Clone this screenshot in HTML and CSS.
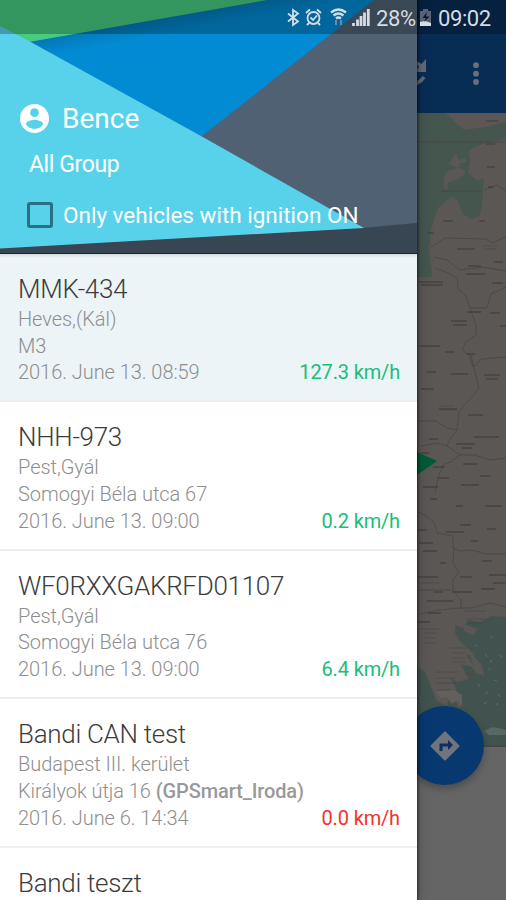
FILE: index.html
```html
<!DOCTYPE html>
<html lang="en">
<head>
    <meta charset="UTF-8">
    <meta name="viewport" content="width=device-width, initial-scale=1.0">
    <title>Vehicles</title>
    <link rel="stylesheet" href="styles.css">
</head>
<body>
    <div class="screen">
        <!-- map page, dimmed behind the drawer -->
        <div class="page">
            <div class="toolbar">
                <svg class="refresh" viewBox="0 0 24 30" fill="none" stroke="#626a74" stroke-width="3.600">
                    <path d="M2 6Q12 1 18 8M3 26Q15 26 20 18"/>
                    <path d="M22 0V13H10Z" fill="#626a74" stroke="none"/>
                </svg>
                <svg class="more" viewBox="0 0 6 24" fill="#68717b">
                    <circle cx="3" cy="3.2" r="2.9"/><circle cx="3" cy="11.7" r="2.9"/><circle cx="3" cy="20" r="2.9"/>
                </svg>
            </div>
            <svg class="map" viewBox="400 113 106 632">
                <path d="M400 113H506V745H400Z" fill="#5b5755"/>
                <path d="M400 113H446L455 122L464 130L486 127L506 122V139L482 144L469 150L470 162L468 173L478 181L484 178L483 190L482 207L479 216L471 219L463 214L458 202L453 196L447 200L438 208L434 220L431 230L429 250L432 272L431 277H400Z" fill="#45564f"/>
                <path d="M446 113H488L485 123L464 128L456 122Z" fill="#5b5755"/>
                <path d="M449 164L453 158L456 153L459 160L466 158V162L459 164L459 168L453 166ZM444 176L449 170L459 168L466 171L464 175L456 180L448 182L447 191L444 188Z" fill="#5b5755"/>
                <path d="M455 625L462 628L469 620L480 622L491 616L506 617V745H400V655L412 664L426 672L441 675L452 674L462 681L469 679L461 665L470 666L478 672L466 655L475 655L460 641L455 633Z" fill="#42534f"/>
                <path d="M421 663L442 674L456 671L463 680L458 682L451 678L463 704L459 708L451 693L447 706L437 701L431 687ZM468 650L482 665L484 676L476 673ZM463 624L478 629L473 635L464 631Z" fill="#5b5755"/>
                <path d="M436 691L454 690L462 695V706L457 700L452 704L447 697L440 698Z" fill="#625f5d"/>
                <path d="M484 731L493 727L506 730V735L489 735Z" fill="#596762"/>
                <path d="M485 654l2 3M490 662l2 -2M494 680l3 1M485 694l3 -2M498 694l2 3M489 668l1 2M500 655l2 2M484 704l3 -2M496 705l2 -2M475 645l2 1M478 684l2 3M491 636l1 2" stroke="#5c6562" stroke-width="1.2"/>
                <g fill="none" stroke="#484544" stroke-width=".8">
                    <path d="M418 142H506M441 191H482M484 190L497 185L506 191M431 247L445 238L486 239L492 243L506 237M434 257L447 260L460 270L482 267L506 271M435 268L448 273L457 278L458 289L466 296L470 308H487L491 294L506 287"/>
                    <path d="M470 308L476 325V335L466 342L462 350L469 355L473 367L482 359L506 357M471 355L476 376L479 388L472 397L459 411L457 430L450 439L447 446L460 455L451 462L444 464L438 477L435 493M418 421L436 421L447 428L458 430M421 446L438 443L447 446M460 455L475 455L490 460L506 458"/>
                    <path d="M418 512L428 517L435 524L437 533L453 536L453 548L460 551L472 550L486 554L506 554M454 549L453 563L459 573L453 579V590L461 600V608L472 608L490 603L506 607M461 608L439 610L420 614M418 590H451"/>
                </g>
                <g class="labels" fill="none" stroke="#35312f" stroke-width="1.3">
                    <path d="M486 121H498M486 144H495M487 167H495M488 187H493M480 221H485M443 221H453M428 233H434M457 249H475M468 266H481M466 274H485M494 262H503M492 283H503M419 282H443M421 285H443"/>
                    <path d="M467 312H481M490 313H500M451 321H467M453 325H467M500 326H506M420 346H440M445 352H454M467 354H475M427 372H436M451 374H468M484 375H500M486 379H498M421 389H434M439 409H457M468 415H483M429 439H438M474 437H499M456 444H475M462 448H472M421 453H429M463 464H477M433 467H445M480 476H490M438 478H449M461 485H479M423 487H438M430 499H437M456 506H463M485 506H502"/>
                    <path d="M460 525H471M487 529H496M418 530H427M446 532H464M471 541H478M419 543H433M423 551H437M482 561H492M440 563H446M460 577H472M489 575H506M418 577H438M493 583H505M434 592H443M452 592H472M481 589H495M427 601H453M428 613H441M418 622H430"/>
                </g>
                <g class="labels faint" fill="none" stroke="#3c3536" stroke-width="1.2">
                    <path d="M482 246H498M484 249H496M439 406H454M441 410H457M464 611H486M466 619H484M467 623H482M418 583H440M418 629H439M424 633H437M424 638H436M424 643H437M449 648H467M452 653H465M453 658H465M452 662H466M436 672H458M435 678H455M436 683H456M437 690H451"/>
                </g>
                <path d="M478 221H485M465 674H475" stroke="#673d3d" stroke-width="1.2"/>
                <path d="M417 452L437 461L417 475Z" fill="#005b36"/>
            </svg>
            <div class="panel"></div>
            <div class="fab">
                <svg viewBox="0 0 30 30">
                    <path d="M15 1.5L28.5 15L15 28.5L1.5 15Z" fill="#70757d" stroke="#70757d" stroke-width="2" stroke-linejoin="round"/>
                    <path d="M11 20V14H19" fill="none" stroke="#102d61" stroke-width="3"/>
                    <path d="M18 9L23 14L18 19Z" fill="#102d61"/>
                </svg>
            </div>
        </div>

        <div class="drawer">
            <div class="header">
                <svg class="header-bg" viewBox="0 0 417 253" preserveAspectRatio="none">
                    <defs>
                        <linearGradient id="shade" gradientUnits="userSpaceOnUse" x1="140" y1="22" x2="143" y2="38">
                            <stop offset="0" stop-color="#0479b8"/>
                            <stop offset="1" stop-color="#028ad3"/>
                        </linearGradient>
                    </defs>
                    <rect width="417" height="253" fill="#384553"/>
                    <path d="M0 0H417V223L362 228L200 137Z" fill="#4f6172"/>
                    <path d="M29 41L267 0H374L201 137Z" fill="url(#shade)"/>
                    <path d="M0 0H267L29 42L0 27Z" fill="#46cb80"/>
                    <path d="M0 26L29 41L201 136L364 228L0 248.500Z" fill="#58d2eb"/>
                </svg>
                <div class="user">
                    <svg class="avatar" viewBox="2 2 20 20" fill="#fff">
                        <path d="M12 2C6.480 2 2 6.480 2 12s4.480 10 10 10 10-4.480 10-10S17.520 2 12 2zm0 3c1.660 0 3 1.340 3 3s-1.340 3-3 3-3-1.340-3-3 1.340-3 3-3zm0 14.200c-2.500 0-4.710-1.280-6-3.220.030-1.990 4-3.080 6-3.080 1.990 0 5.970 1.090 6 3.080-1.290 1.940-3.500 3.220-6 3.220z"/>
                    </svg>
                    <span>Bence</span>
                </div>
                <div class="group">All Group</div>
                <div class="filter">
                    <span class="checkbox"></span>
                    <span>Only vehicles with ignition ON</span>
                </div>
            </div>
            <div class="list">
                <div class="item selected">
                    <div class="name">MMK-434</div>
                    <div>Heves,(Kál)</div>
                    <div>M3</div>
                    <div class="last"><span>2016. June 13. 08:59</span><span class="speed">127.3 km/h</span></div>
                </div>
                <div class="item">
                    <div class="name">NHH-973</div>
                    <div>Pest,Gyál</div>
                    <div>Somogyi Béla utca 67</div>
                    <div class="last"><span>2016. June 13. 09:00</span><span class="speed">0.2 km/h</span></div>
                </div>
                <div class="item">
                    <div class="name">WF0RXXGAKRFD01107</div>
                    <div>Pest,Gyál</div>
                    <div>Somogyi Béla utca 76</div>
                    <div class="last"><span>2016. June 13. 09:00</span><span class="speed">6.4 km/h</span></div>
                </div>
                <div class="item">
                    <div class="name">Bandi CAN test</div>
                    <div>Budapest III. kerület</div>
                    <div>Királyok útja 16 <b>(GPSmart_Iroda)</b></div>
                    <div class="last"><span>2016. June 6. 14:34</span><span class="speed stopped">0.0 km/h</span></div>
                </div>
                <div class="item">
                    <div class="name">Bandi teszt</div>
                </div>
            </div>
        </div>

        <div class="statusbar">
            <svg class="status-icons" viewBox="286 6 86 24" fill="none" stroke="#d3dde5" stroke-width="1.800">
                <path d="M288 14.500L298 22.500L293 26V11L298 14.500L288 22.500"/>
                <circle cx="313.500" cy="19" r="6"/>
                <path d="M310.500 18.500L313 21L317 16.500M306 14L310 10.500M317 10.500L321 14M309 24L307 26M318 24L320 26"/>
                <path d="M331 13.500Q338.500 7.500 346 13.500M333.500 16.500Q338.500 12.500 343.500 16.500M336 19.500Q338.500 17.500 341 19.500" stroke-width="2.400"/>
                <path d="M336 21V26M341 21V26" stroke="#7193ac"/>
                <path d="M353.500 27V24M357.500 27V20.500M361 27V17M364.500 27V13.500M368.300 27V10" stroke-width="2.800"/>
            </svg>
            <span class="percent">28%</span>
            <svg class="battery" viewBox="0 0 13 18">
                <path d="M4 0H9V2H12V17H1V2H4Z" fill="#566373"/>
                <path d="M1 13L6 12L12 14V17H1Z" fill="#d6dde5"/>
                <path d="M8 3L3.500 9H7L5 13L10.500 7.500H7Z" fill="#07172c"/>
            </svg>
            <span class="time">09:02</span>
        </div>
    </div>
</body>
</html>
```
FILE: styles.css
```css
* {
    box-sizing: border-box;
}

body {
    margin: 0;
    font-family: Roboto, "Noto Sans", sans-serif;
    overflow: hidden;
}

.screen {
    position: relative;
    width: 506px;
    height: 900px;
    overflow: hidden;
}

.page {
    display: flex;
    flex-direction: column;
    height: 100%;
    background: #656565;
}

.toolbar {
    flex: 0 0 113px;
    display: flex;
    justify-content: flex-end;
    padding: 59px 27px 0 0;
    background: #082d55;
}

.refresh {
    width: 24px;
    height: 30px;
    margin-right: 45px;
}

.more {
    width: 6px;
    height: 24px;
    margin-top: 3px;
}

.map {
    display: block;
    width: 106px;
    height: 632px;
    margin-left: 400px;
}

.labels {
    opacity: 0.5;
}

.labels.faint {
    opacity: 0.35;
}

.panel {
    flex: 1;
    border-top: 2px solid #434948;
    background: #656565;
}

/* floating route button */
.fab {
    position: absolute;
    left: 405px;
    top: 706px;
    width: 79px;
    height: 79px;
    border-radius: 50%;
    display: flex;
    align-items: center;
    justify-content: center;
    background: #073970;
    box-shadow: 0 4px 7px rgba(0, 0, 0, 0.25);
}

.fab svg {
    width: 30px;
    height: 30px;
}

.drawer {
    position: absolute;
    left: 0;
    top: 0;
    width: 417px;
    height: 900px;
    background: #fff;
    overflow: hidden;
    box-shadow: 0 0 3px 1px rgba(0, 0, 0, 0.6), 0 0 16px rgba(0, 0, 0, 0.2);
}

.header {
    position: relative;
    height: 254px;
    padding: 102px 0 0 20px;
    border-bottom: 1px solid #142635;
    color: #fff;
}

.header-bg {
    position: absolute;
    left: 0;
    top: 0;
    width: 417px;
    height: 253px;
}

.user,
.group,
.filter {
    position: relative;
    display: flex;
    align-items: center;
    white-space: nowrap;
}

.user {
    height: 32px;
    gap: 13px;
    font-size: 28px;
}

.avatar {
    width: 29px;
    height: 29px;
}

.group {
    height: 30px;
    margin: 15px 0 0 9px;
    font-size: 23px;
    letter-spacing: -0.4px;
}

.filter {
    height: 30px;
    margin: 21px 0 0 7px;
    gap: 10px;
    font-size: 22.5px;
}

.checkbox {
    width: 26px;
    height: 26px;
    border: 3px solid #287084;
    border-radius: 3px;
}

.list {
    background: #fff;
}

.item {
    height: 148.4px;
    padding: 19px 17px 0 18px;
    border-bottom: 2px solid #eee;
    background: #fff;
    color: #8e8e8e;
    font-size: 20px;
    font-weight: 300;
    line-height: 26.7px;
    letter-spacing: -0.05px;
    white-space: nowrap;
}

.item.selected {
    background: linear-gradient(#d7dddd, #ecf4f8 4px);
    border-color: #e8eff2;
}

.item b {
    font-weight: 500;
    color: #999;
    letter-spacing: -0.1px;
}

.name {
    height: 33px;
    line-height: 32px;
    font-size: 26px;
    letter-spacing: -0.3px;
    color: #3c3c3c;
}

.last {
    display: flex;
    justify-content: space-between;
}

.speed {
    color: #1bbd7a;
    font-weight: 400;
    letter-spacing: -0.15px;
}

.speed.stopped {
    color: #f5322c;
}

.statusbar {
    position: absolute;
    left: 0;
    top: 0;
    width: 506px;
    height: 34px;
    display: flex;
    align-items: center;
    padding: 2px 14px 0 286px;
    background: rgba(0, 0, 0, 0.26);
    color: #d5dce2;
    font-size: 22px;
    letter-spacing: -0.4px;
    white-space: nowrap;
}

.status-icons {
    flex: none;
    width: 86px;
    height: 24px;
    margin-top: -2px;
}

.percent {
    margin-left: 4px;
    width: 43px;
}

.battery {
    flex: none;
    width: 13px;
    height: 18px;
    margin-right: 6px;
}
```
